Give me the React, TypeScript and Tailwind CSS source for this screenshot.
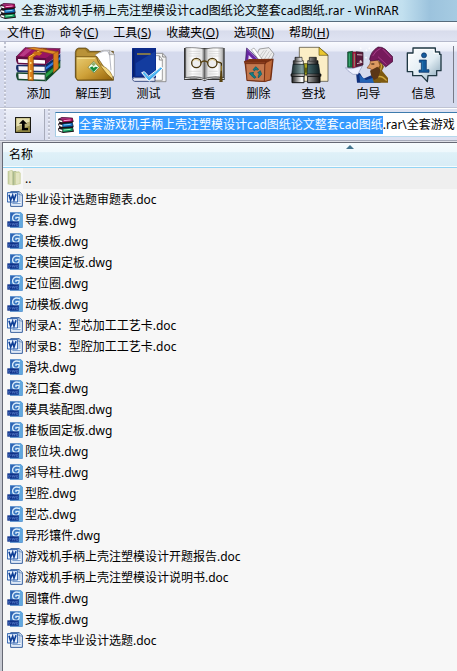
import React, { useEffect, useRef } from 'react';

type FileKind = 'folder' | 'doc' | 'dwg';

interface ArchiveEntry {
  name: string;
  kind: FileKind;
}

const ARCHIVE = '全套游戏机手柄上壳注塑模设计cad图纸论文整套cad图纸';

const entries: ArchiveEntry[] = [
  { name: '..', kind: 'folder' },
  { name: '毕业设计选题审题表.doc', kind: 'doc' },
  { name: '导套.dwg', kind: 'dwg' },
  { name: '定模板.dwg', kind: 'dwg' },
  { name: '定模固定板.dwg', kind: 'dwg' },
  { name: '定位圈.dwg', kind: 'dwg' },
  { name: '动模板.dwg', kind: 'dwg' },
  { name: '附录A：型芯加工工艺卡.doc', kind: 'doc' },
  { name: '附录B：型腔加工工艺卡.doc', kind: 'doc' },
  { name: '滑块.dwg', kind: 'dwg' },
  { name: '浇口套.dwg', kind: 'dwg' },
  { name: '模具装配图.dwg', kind: 'dwg' },
  { name: '推板固定板.dwg', kind: 'dwg' },
  { name: '限位块.dwg', kind: 'dwg' },
  { name: '斜导柱.dwg', kind: 'dwg' },
  { name: '型腔.dwg', kind: 'dwg' },
  { name: '型芯.dwg', kind: 'dwg' },
  { name: '异形镶件.dwg', kind: 'dwg' },
  { name: '游戏机手柄上壳注塑模设计开题报告.doc', kind: 'doc' },
  { name: '游戏机手柄上壳注塑模设计说明书.doc', kind: 'doc' },
  { name: '圆镶件.dwg', kind: 'dwg' },
  { name: '支撑板.dwg', kind: 'dwg' },
  { name: '专接本毕业设计选题.doc', kind: 'doc' },
];

const menus = [
  { label: '文件', hotkey: 'F' },
  { label: '命令', hotkey: 'C' },
  { label: '工具', hotkey: 'S' },
  { label: '收藏夹', hotkey: 'O' },
  { label: '选项', hotkey: 'N' },
  { label: '帮助', hotkey: 'H' },
];

// Small stack of three books, used in the title bar and the address bar
const BooksIcon = () => (
  <svg viewBox="0 0 48 48" className="h-4 w-4 shrink-0" aria-hidden="true">
    <path d="M0 6 12 0 44 2 47 14 44 16 47 29 45 32 48 44 15 48 2 43 0 35 4 31 0 21 4 17Z" fill="#1c1018" />
    <path d="M3 6 14 1 43 3 33 7 14 9Z" fill="#9a2c74" />
    <path d="M13 8 44 4V13L14 16Z" fill="#a80f5c" />
    <path d="M17 11 38 9" stroke="#ffa8d8" strokeWidth="3" />
    <path d="M3 9 13 11V16L4 14Z" fill="#fff" />
    <path d="M13 21 44 18V28L14 30Z" fill="#0f6cb8" />
    <path d="M17 24 38 22" stroke="#8ad6ff" strokeWidth="3" />
    <path d="M3 22 13 24V30L4 27Z" fill="#fff" />
    <path d="M13 35 44 33V42L15 45Z" fill="#10985c" />
    <path d="M17 39 38 37" stroke="#9df5c4" strokeWidth="3" />
    <path d="M3 36 13 38V44L4 41Z" fill="#fff" />
  </svg>
);

const AddIcon = () => (
  <svg viewBox="42 18 144 114" className="h-[38px] w-12" aria-hidden="true">
    <path d="M134 92 178 60V83L134 125Z" fill="#0c4a24" />
    <path d="M134 102 176 69V78L134 113Z" fill="#28a045" />
    <path d="M134 73 178 42V63L134 96Z" fill="#0b2966" />
    <path d="M134 82 177 51V59L134 89Z" fill="#2f7de0" />
    <path d="M47 97 134 99V124L50 121Q42 108 47 97Z" fill="#17492e" />
    <path d="M52 101 131 104V119L53 116Z" fill="#f4f4f6" />
    <path d="M47 75 134 74V97L50 96Q42 86 47 75Z" fill="#182c68" />
    <path d="M52 79 131 80V93L53 91Z" fill="#f6f6f8" />
    <path d="M46 49 135 53V76L50 73Q42 61 46 49Z" fill="#641045" />
    <path d="M51 57 132 61V71L52 68Z" fill="#fff" />
    <path d="M46 50 72 23 178 26 135 56Z" fill="#9a1462" stroke="#4c0c38" strokeWidth="2" />
    <path d="M55 48 76 26 95 27 68 49Z" fill="#b83a86" />
    <path d="M135 55 178 27V40L135 73Z" fill="#771052" />
    <path d="M81 50 122 25 137 26 97 52V122L81 121Z" fill="#d87c17" stroke="#77400b" strokeWidth="2" />
    <path d="M84 51 124 27" stroke="#ffc45e" strokeWidth="3" />
    <path d="M86 54V118" stroke="#f9b04a" strokeWidth="3" />
    <path d="M80 25 159 43 173 36 99 22Z" fill="#e18b26" stroke="#834711" strokeWidth="1.5" />
    <path d="M157 41 172 34V85L157 99Z" fill="#d87b1c" stroke="#834711" strokeWidth="1.5" />
    <path d="M101 34 124 40 115 47 94 41Z" fill="#c96e15" />
    <circle cx="89" cy="69" r="3" fill="#ffe78b" />
    <circle cx="89" cy="93" r="3" fill="#ffe78b" />
    <circle cx="89" cy="114" r="3" fill="#ffe78b" />
  </svg>
);

const ExtractIcon = () => (
  <svg viewBox="207 18 144 114" className="h-[38px] w-12" aria-hidden="true">
    <defs>
      <linearGradient id="folderGold" x1="0" y1="0" x2="1" y2="1">
        <stop offset="0" stopColor="#e8cc72" />
        <stop offset=".5" stopColor="#cfa23a" />
        <stop offset="1" stopColor="#946208" />
      </linearGradient>
    </defs>
    <path d="M223 37Q224 25 233 24H254Q260 25 266 34H337V121H229L223 112Z" fill="#9b7722" stroke="#4b370b" strokeWidth="2" />
    <path d="M227 39Q228 29 235 28H252L260 38H300V56H227Z" fill="#b99238" />
    <path d="M283 44 306 31H326L340 43V109L316 118 289 61Z" fill="#fff" stroke="#777" strokeWidth="1.5" />
    <path d="M294 39 309 33H320L326 45 330 91" fill="none" stroke="#b7bac4" strokeWidth="3" />
    <path d="M325 31V44H340" fill="#ddd" stroke="#777" strokeWidth="1.5" />
    <path d="M225 50H288L334 119 231 120Q225 119 225 111Z" fill="url(#folderGold)" stroke="#654709" strokeWidth="2" />
    <path d="M287 50Q289 70 306 78 331 90 338 120Q316 104 302 82Q288 62 287 50Z" fill="#f5d880" stroke="#654709" strokeWidth="1.5" />
    <path d="M229 55H282" stroke="#ffeda8" strokeWidth="2" />
    <path d="M278 64 295 82 279 99 261 82Z" fill="#f3fff0" stroke="#63742f" strokeWidth="2" />
    <path d="M266 83 274 79 278 84 283 80 291 82 278 96Z" fill="#168b3b" />
    <path d="M278 66 284 73 278 79 271 73Z" fill="#8fae6a" />
  </svg>
);

const TestIcon = () => (
  <svg viewBox="27 18 144 114" className="h-[38px] w-12" aria-hidden="true">
    <path d="M111 40H140L150 50V125H108Z" fill="#f3f3f3" stroke="#666" strokeWidth="2" />
    <path d="M111 47H130L139 59V121H111Z" fill="#fff" stroke="#777" strokeWidth="2" />
    <path d="M130 48V60H139M140 41V51H149" fill="none" stroke="#555" strokeWidth="2" />
    <path d="M49 24H120V113H56Q50 119 58 124H101" fill="#0a1f6d" />
    <path d="M48 25Q48 24 53 24H120V111H54Q48 113 48 119Z" fill="#0b2a8a" />
    <path d="M52 27H55V109L52 111Z" fill="#071c5a" />
    <path d="M59 70 118 34V104L59 108Z" fill="#1745a8" opacity=".7" />
    <path d="M50 119Q49 113 56 113H117V124H56Q51 123 50 119Z" fill="#e6e9f5" stroke="#09205f" strokeWidth="2" />
    <path d="M63 42H104" stroke="#0b1d52" strokeWidth="6" />
    <path d="M63 42H104" stroke="#f1cd48" strokeWidth="3" />
    <path d="M77 98 85 95 98 109 134 81 141 84 99 124Z" fill="#36a8ed" stroke="#fff" strokeWidth="3" strokeLinejoin="round" />
    <path d="M82 99 98 115 133 85" fill="none" stroke="#86d9ff" strokeWidth="2" />
  </svg>
);

const ViewIcon = () => (
  <svg viewBox="192 18 144 114" className="h-[38px] w-12" aria-hidden="true">
    <defs>
      <linearGradient id="pageShade">
        <stop offset="0" stopColor="#c9c9c9" />
        <stop offset=".18" stopColor="#fff" />
        <stop offset=".42" stopColor="#e6e6e6" />
        <stop offset=".5" stopColor="#777" />
        <stop offset=".6" stopColor="#e6e6e6" />
        <stop offset=".84" stopColor="#fff" />
        <stop offset="1" stopColor="#aaa" />
      </linearGradient>
    </defs>
    <path d="M204 24H326V120H273L266 124 259 120H204Z" fill="#333" />
    <path d="M209 23Q244 22 265 27 289 22 322 24V112Q287 107 265 116 242 106 209 113Z" fill="url(#pageShade)" stroke="#565656" strokeWidth="2" />
    <path d="M206 116Q245 110 265 119 287 110 324 116" fill="none" stroke="#e8e8e8" strokeWidth="3" />
    <path d="M218 34H253M218 41H253M218 48H253M278 34H312M278 41H312M278 48H312M218 94H254M278 94H305M218 102H254M278 102H305" stroke="#cfcfcf" strokeWidth="2" />
    <path d="M265 27V116" stroke="#555" strokeWidth="2" />
    <circle cx="241" cy="69" r="14" fill="#eee" stroke="#493710" strokeWidth="4" />
    <circle cx="289" cy="69" r="14" fill="#eee" stroke="#493710" strokeWidth="4" />
    <path d="M254 68Q265 58 276 68M302 65 316 69" fill="none" stroke="#594211" strokeWidth="4" />
    <path d="M230 64Q239 53 250 64M279 64Q289 53 299 64" fill="none" stroke="#d8b759" strokeWidth="2" />
    <path d="M316 69V105" stroke="#392c0c" strokeWidth="4" />
    <path d="M316 77V94" stroke="#dfb737" strokeWidth="2" />
    <path d="M314 92 310 126H320L318 92Z" fill="#594311" />
  </svg>
);

const DeleteIcon = () => (
  <svg viewBox="12 18 144 114" className="h-[38px] w-12" aria-hidden="true">
    <path d="M72 57 85 27 114 23 129 42 119 64Z" fill="#eee" stroke="#777" strokeWidth="2" />
    <path d="M82 54 99 31M90 56 107 30M99 59 115 34M109 60 122 39" stroke="#b4b4b4" strokeWidth="2" />
    <path d="M47 24 92 68H43Z" fill="#6727a1" stroke="#2e0d55" strokeWidth="2" />
    <path d="M53 45 69 61H52Z" fill="#ead9fa" />
    <path d="M47 27 88 66" stroke="#b682df" strokeWidth="2" />
    <path d="M61 29 69 24 95 60H84Z" fill="#fff" stroke="#777" strokeWidth="1.5" />
    <path d="M40 64 55 57 128 56 121 121 100 126 47 123Z" fill="#7b3113" />
    <path d="M44 69H102L100 124 48 121Z" fill="#c4784e" stroke="#64250f" strokeWidth="2" />
    <path d="M102 69 125 58 118 119 100 125Z" fill="#c06a3a" stroke="#64250f" strokeWidth="2" />
    <path d="M40 64H104V71H42Z" fill="#8a3c1c" stroke="#64250f" strokeWidth="1.5" />
    <path d="M66 89 74 80 83 88 78 91 74 87 71 93ZM55 99 68 97 66 102 75 112 70 115 59 105ZM88 92 92 103 82 114V107L85 101 80 98Z" fill="#0f7f88" stroke="#075461" strokeWidth="2" />
  </svg>
);

const FindIcon = () => (
  <svg viewBox="177 18 144 114" className="h-[38px] w-12" aria-hidden="true">
    <defs>
      <linearGradient id="barrel">
        <stop offset="0" stopColor="#19292c" />
        <stop offset=".35" stopColor="#7d9999" />
        <stop offset=".6" stopColor="#3f6165" />
        <stop offset="1" stopColor="#0e1c20" />
      </linearGradient>
      <linearGradient id="steel">
        <stop offset="0" stopColor="#222" />
        <stop offset=".35" stopColor="#fff" />
        <stop offset=".65" stopColor="#888" />
        <stop offset="1" stopColor="#111" />
      </linearGradient>
    </defs>
    <path d="M205 22H264L291 45V124H205Z" fill="#fbeec6" stroke="#3e3a29" strokeWidth="2" />
    <path d="M264 22V46H291Z" fill="#ebc72e" stroke="#625415" strokeWidth="2" />
    <path d="M218 71H232V105H218Z" fill="#a8a51c" stroke="#383807" strokeWidth="2" />
    <path d="M192 52H213V62H217V75H187V62H192ZM235 52H256V62H261V75H230V62H235Z" fill="url(#steel)" stroke="#111" strokeWidth="2" />
    <path d="M190 64H214M233 64H258" stroke="#333" strokeWidth="2" />
    <path d="M186 73H219L221 104H182ZM230 73H263L267 104H228Z" fill="url(#barrel)" stroke="#0a1519" strokeWidth="2" />
    <path d="M180 102H221V109H180ZM228 102H270V109H228Z" fill="url(#steel)" stroke="#111" strokeWidth="2" />
    <path d="M183 109H219V128H183ZM230 109H267V128H230Z" fill="url(#steel)" stroke="#111" strokeWidth="3" />
    <path d="M221 83H228V98H221Z" fill="#5c5f10" />
  </svg>
);

const WizardIcon = () => (
  <svg viewBox="21 18 144 114" className="h-[38px] w-12" aria-hidden="true">
    <path d="M57 128 54 97 66 100 76 116 100 106 128 116V128Z" fill="#10307c" />
    <path d="M66 127 64 104 84 120 104 114 112 128Z" fill="#2463b4" />
    <path d="M122 62Q134 68 138 80L132 92 150 114V128H108L104 116 118 100Z" fill="#7e5a10" />
    <path d="M128 70Q134 80 124 96M116 112Q130 104 146 122" fill="none" stroke="#d0a63c" strokeWidth="4" />
    <path d="M98 58 116 52 126 76 116 92 100 90 98 86 87 84 96 72Z" fill="#dc9a60" stroke="#7b431d" strokeWidth="2" />
    <path d="M96 92 118 80 128 90 120 114 108 120 100 108Z" fill="#5b3617" />
    <path d="M100 72H109" stroke="#281309" strokeWidth="3" />
    <path d="M95 58Q98 34 120 21 132 20 142 28L164 50 165 64 143 81 121 60 98 63Z" fill="#761a5c" stroke="#3a0a30" strokeWidth="2" />
    <path d="M104 48Q114 30 128 25M120 50 146 74M134 27 160 54" fill="none" stroke="#a83c88" strokeWidth="3" />
    <path d="M29 36 44 34V82H29Z" fill="#147043" stroke="#0b3320" strokeWidth="2" />
    <path d="M44 36 55 36V84H44Z" fill="#b41c3e" stroke="#57102f" strokeWidth="2" />
    <path d="M55 35 75 37V75L55 83Z" fill="#5b1a3c" stroke="#271421" strokeWidth="2" />
    <path d="M34 40V79M49 41V80" stroke="#59cc92" strokeWidth="2" />
    <path d="M57 44 73 45M57 71 73 67" stroke="#d1b3bf" strokeWidth="3" />
    <path d="M22 83Q41 90 56 82L73 78 65 92 60 103H45L30 92Z" fill="#eef1ff" stroke="#7781ad" strokeWidth="1.5" />
    <path d="M68 22V28M65 25H71M85 28V34M82 31H88M94 22V28M91 25H97M68 60V68M64 64H72M84 50V56M81 53H87" stroke="#fff" strokeWidth="2" />
  </svg>
);

const InfoIcon = () => (
  <svg viewBox="186 18 144 114" className="h-[38px] w-12" aria-hidden="true">
    <defs>
      <linearGradient id="bubble" x1="0" y1="0" x2="1" y2="1">
        <stop offset="0" stopColor="#fff" />
        <stop offset=".55" stopColor="#e0ecf3" />
        <stop offset="1" stopColor="#7d9cb0" />
      </linearGradient>
    </defs>
    <path d="M225 24H292V36H305V43H309V92H296V107H270L268 125 251 107H224V95H208V39H225Z" fill="url(#bubble)" stroke="#203843" strokeWidth="4" strokeLinejoin="round" />
    <path d="M230 29H288V40H301M213 88V44H229" fill="none" stroke="#fff" strokeWidth="3" />
    <circle cx="258" cy="46" r="7.5" fill="#145a9c" stroke="#082d5f" strokeWidth="2" />
    <path d="M244 60H265V89H273V97H243V90H250V67H244Z" fill="#145a9c" stroke="#082d5f" strokeWidth="2" />
    <path d="M254 64V92" stroke="#2b83bd" strokeWidth="2" />
  </svg>
);

const FolderIcon = () => (
  <svg viewBox="0 0 48 48" className="h-4 w-4 shrink-0" aria-hidden="true">
    <path d="M2 4 14 0 18 2V46L2 43Z" fill="#c3cb9c" />
    <path d="M7 4 15 2V45L7 43Z" fill="#dfe2bd" />
    <path d="M18 4 28 3V44L18 46Z" fill="#a9b890" />
    <path d="M22 6 36 4 41 9V42L22 46Z" fill="#cdd3a2" />
    <path d="M27 9 38 8V40L27 43Z" fill="#e2e4c2" />
  </svg>
);

const DocIcon = () => (
  <svg viewBox="0 0 48 48" className="h-4 w-4 shrink-0" aria-hidden="true">
    <path d="M11 2H37L46 11V46H11Z" fill="#f2f8ff" stroke="#2f5a9a" strokeWidth="3" />
    <path d="M36 2V12H46" fill="#c9def4" stroke="#2f5a9a" strokeWidth="2" />
    <path d="M35 18H41M35 24H41M35 30H41M16 38H41" stroke="#6c94c8" strokeWidth="3" />
    <path d="M1 5H32V33H1Z" fill="#eaf3ff" stroke="#2458a8" strokeWidth="3" />
    <path d="M6 11 11 27 17 13 21 27 27 10" fill="none" stroke="#0f3f96" strokeWidth="5" />
  </svg>
);

const DwgIcon = () => (
  <svg viewBox="0 0 48 48" className="h-4 w-4 shrink-0" aria-hidden="true">
    <path d="M9 1H41L47 7V47H9Z" fill="#3a78c2" />
    <path d="M36 1H41L47 7V46H36Z" fill="#62a8de" />
    <path d="M12 4H26L12 20Z" fill="#2f62b2" />
    <path d="M39 8Q21 2 17 15 15 28 28 28 38 26 36 16H27V21" fill="none" stroke="#d9ecfb" strokeWidth="4" />
    <path d="M1 28H35V44H1Z" fill="#10338a" />
    <path d="M5 33V40H8Q14 36 8 33ZM15 33 17 40 20 34 23 40 25 33M33 34H28V40H33V37" fill="none" stroke="#5a80cc" strokeWidth="2" />
  </svg>
);

const fileIcons: Record<FileKind, React.ReactNode> = {
  folder: <FolderIcon />,
  doc: <DocIcon />,
  dwg: <DwgIcon />,
};

const tools = [
  { label: '添加', icon: <AddIcon /> },
  { label: '解压到', icon: <ExtractIcon /> },
  { label: '测试', icon: <TestIcon /> },
  { label: '查看', icon: <ViewIcon /> },
  { label: '删除', icon: <DeleteIcon /> },
  { label: '查找', icon: <FindIcon /> },
  { label: '向导', icon: <WizardIcon /> },
  { label: '信息', icon: <InfoIcon /> },
];

const Grip = () => (
  <div className="w-[2px] shrink-0 self-stretch bg-[repeating-linear-gradient(to_bottom,#bfc2d0_0px,#bfc2d0_2px,#f0f2fa_2px,#f0f2fa_3px,transparent_3px,transparent_4px)]" />
);

const App: React.FC = () => {
  const addressRef = useRef<HTMLInputElement>(null);

  // The archive name is selected, the way the address bar looks after a click
  useEffect(() => {
    addressRef.current?.focus();
    addressRef.current?.setSelectionRange(0, ARCHIVE.length);
  }, []);

  return (
    <div className="flex min-h-screen flex-col overflow-hidden bg-[#f7f7f7] font-['Noto_Sans','Noto_Sans_CJK_SC',sans-serif] text-xs text-black">
      <header className="flex h-[22px] items-center gap-[5px] border-b border-[#566b7c] bg-[linear-gradient(to_right,#dceef6,#cfe7f3_60%,#c2e0ef_88%,#9cc3dd_94%,#a6cbe2)] pt-px">
        <BooksIcon />
        <h1 className="whitespace-nowrap">{ARCHIVE}.rar - WinRAR</h1>
      </header>

      <nav className="flex h-5 items-center gap-[15px] border-b border-[#b5b9cc] bg-[linear-gradient(to_bottom,#fdfdff,#eceef7_40%,#d8dcec_48%,#dfe3f2)] pt-[2px] pl-[7px]">
        {menus.map((m) => (
          <button key={m.label} className="whitespace-nowrap">
            {m.label}(<span className="underline">{m.hotkey}</span>)
          </button>
        ))}
      </nav>

      <div className="flex h-[66px] border-b border-[#bfc3d3] bg-[linear-gradient(to_bottom,#fafbff,#e9ecf7_9px,#d5daed_10px,#d5daed)] pl-1">
        <Grip />
        <div className="flex pl-[5px]">
          {tools.map((t) => (
            <button key={t.label} className="flex w-[55px] shrink-0 flex-col items-center pt-1">
              {t.icon}
              <span className="leading-5">{t.label}</span>
            </button>
          ))}
        </div>
        <div className="my-1 ml-[2px] w-px bg-[#777b88]" />
      </div>

      <div className="flex h-[33px] items-stretch border-t border-b border-t-white border-b-[#a7abba] bg-[#dde1f1] pl-1">
        <Grip />
        <button aria-label="上一级" className="flex w-[39px] items-center justify-center border-r border-[#a7abba] bg-[linear-gradient(to_bottom,#eceff8,#d5daed)] pr-1">
          <svg viewBox="0 0 48 48" className="h-4 w-4" aria-hidden="true">
            <path d="M1 1H47V47H1Z" fill="#8d8440" stroke="#000" strokeWidth="3" />
            <path d="M4 4H44V14L4 30Z" fill="#e5dfb0" />
            <path d="M4 30 44 14V26L4 42Z" fill="#b9b078" />
            <path d="M24 8 36 20H29V33H39V40H21V20H12Z" fill="#000" />
          </svg>
        </button>
        <div className="flex pl-[3px]">
          <Grip />
        </div>
        <label className="my-[3px] ml-[5px] flex min-w-0 flex-1 items-center gap-[5px] border-t border-b border-l border-t-[#3d7bad] border-b-[#b7d9ed] border-l-[#a5cbe3] bg-white pl-[2px]">
          <BooksIcon />
          <input
            ref={addressRef}
            aria-label="地址"
            defaultValue={`${ARCHIVE}.rar\\全套游戏`}
            className="h-[18px] min-w-0 flex-1 leading-[18px] outline-none selection:bg-[#3399ff] selection:text-white"
          />
        </label>
      </div>

      <main className="flex flex-1 border-t border-[#dfe1e8] bg-[#c6c9d2] pl-[2px]">
        <div className="flex-1 border-t border-l border-[#666975] bg-[#f7f7f7]">
          <table className="w-full border-collapse">
            <thead>
              <tr className="h-6 border-b border-[#93d4f4] bg-[linear-gradient(to_bottom,#f7fcfe,#eef8fc_38%,#dff1f8_42%,#d8ecf6)]">
                <th className="relative p-0 text-left font-normal" aria-sort="ascending">
                  <button className="w-full pl-[6px] text-left">名称</button>
                  <svg viewBox="0 0 8 4" className="absolute top-[2px] left-[75.5%] h-1 w-2" aria-hidden="true">
                    <path d="M0 4 4 0 8 4Z" fill="#45768f" />
                  </svg>
                </th>
              </tr>
            </thead>
            <tbody>
              {entries.map((e) => (
                <tr key={e.name} className="h-[21px]">
                  <td className="p-0">
                    <div className="flex items-center pl-1 whitespace-nowrap">
                      {fileIcons[e.kind]}
                      <span className={`flex-1 pl-[2px] leading-[21px] ${e.kind === 'folder' ? 'bg-[#efefef]' : ''}`}>
                        {e.name}
                      </span>
                    </div>
                  </td>
                </tr>
              ))}
            </tbody>
          </table>
        </div>
      </main>
    </div>
  );
};

export default App;
